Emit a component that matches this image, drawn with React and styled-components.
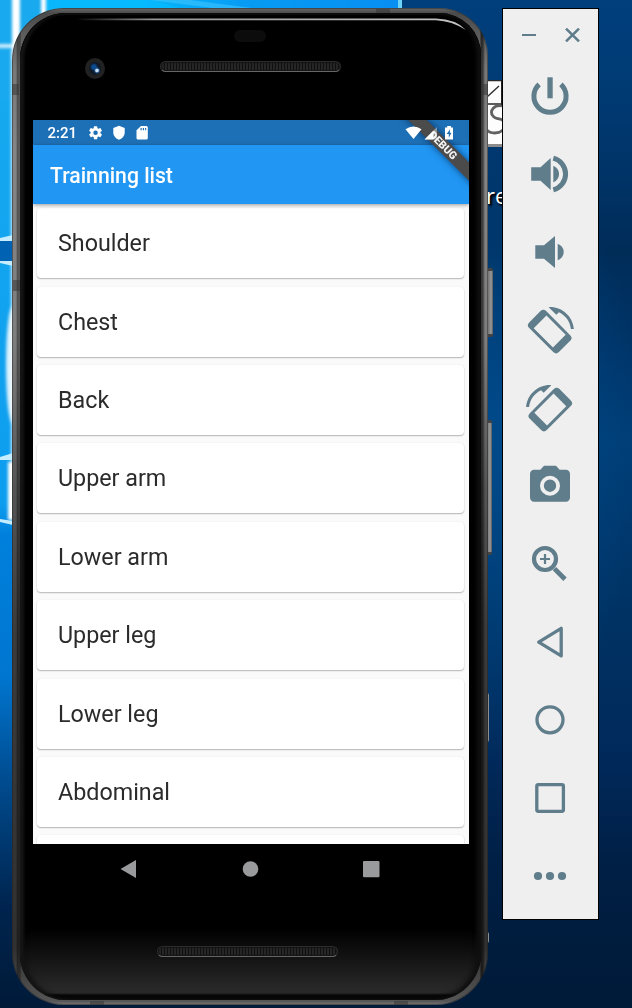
import React from "react";
import styled, { createGlobalStyle } from "styled-components";

const GlobalStyle = createGlobalStyle`
  * { box-sizing: border-box; }
  body { margin: 0; overflow: hidden; font-family: Roboto, "Liberation Sans", sans-serif; }
`;

const ICON = "#607d8b";

/* ---------- desktop ---------- */

const Desktop = styled.div`
  position: relative;
  width: 632px;
  height: 1008px;
  overflow: hidden;
  background:
    radial-gradient(ellipse 160px 330px at 480px 440px, rgba(0, 76, 142, 0.9), rgba(0, 76, 142, 0)),
    linear-gradient(180deg, #003e7c 0, #003c76 70px, #003468 170px, #002c58 250px, #003467 340px, #003e77 440px,
      #003263 620px, #00295a 760px, #001f44 870px, #001a38 1008px);
`;

const Wallpaper = styled.svg`
  position: absolute;
  inset: 0;
`;

const Shortcut = styled.div`
  position: absolute;
  left: 482px;
  top: 80px;
  width: 21px;
`;

const ShortcutTile = styled.svg`
  display: block;
`;

const ShortcutLabel = styled.div`
  margin-top: 32px;
  padding-left: 4px;
  font: 22px/32px "Open Sans", sans-serif;
  color: #fff;
  text-shadow: 1px 1px 2px #000, 2px 2px 2px #000;
`;

/* ---------- phone ---------- */

const Shell = styled.section`
  position: absolute;
  left: 12px;
  top: 8px;
  width: 476px;
  height: 997px;
  padding: 5px 7px 5px 8px;
  border-radius: 52px 48px 52px 52px;
  background:
    linear-gradient(90deg, rgba(0, 0, 0, 0) 0 4px, rgba(0, 0, 0, 0.5) 6px, rgba(0, 0, 0, 0.15) 7px, rgba(0, 0, 0, 0.5) 8px,
      rgba(0, 0, 0, 0) 9px 468px, rgba(0, 0, 0, 0.6) 469px, rgba(0, 0, 0, 0.5) 471px, rgba(0, 0, 0, 0) 473px),
    linear-gradient(180deg, #6b6b6b 0, #4a4a4a 5px, #777 60px, #858585 140px, #7e7e7e 330px, #555 480px, #3b3b3b 620px, #303030 940px, #555 993px, #777);
  box-shadow: inset 0 0 0 1px rgba(30, 30, 30, 0.45);
`;

const Glass = styled.div`
  display: flex;
  flex-direction: column;
  align-items: center;
  height: 987px;
  padding: 0 1px 0 0;
  border-radius: 46px 42px 46px 46px;
  background: linear-gradient(180deg, #000 0 915px, #101010 940px, #2b2b2b 980px, #0a0a0a 982px);
  box-shadow: inset 0 2px 0 #0b0b0b, inset 4px 0 3px #151515, inset -4px 0 4px #111, inset 0 0 8px #000;
`;

const TopBezel = styled.header`
  position: relative;
  width: 100%;
  height: 107px;
`;

const Highlight = styled.svg`
  position: absolute;
  left: 56px;
  top: 4px;
`;

const Sensor = styled.div`
  position: absolute;
  left: 214px;
  top: 17px;
  width: 32px;
  height: 12px;
  border-radius: 6px;
  background: #0c0c0c;
`;

const Camera = styled.div`
  position: absolute;
  left: 65px;
  top: 45px;
  width: 20px;
  height: 21px;
  border: 4px solid #222;
  border-radius: 50%;
  background:
    radial-gradient(circle at 8px 8.5px, #c3dff5 0 1.3px, rgba(30, 90, 160, 0.7) 2.3px, transparent 3.6px),
    radial-gradient(circle at 5px 5px, #0c4a90 0 2px, #101a26 4px);
`;

const Grille = styled.div`
  position: ${(p) => (p.$front ? "absolute" : "static")};
  left: 140px;
  top: 48px;
  width: 181px;
  height: 11px;
  margin: ${(p) => (p.$front ? "0" : "52px 0 0 -5px")};
  border: 1px solid #2c2c2c;
  border-bottom-color: #666;
  border-radius: 6px;
  background: repeating-linear-gradient(90deg, #101010 0 1px, #262626 1px 3px);
  box-shadow: inset 0 0 1px 1px #151515;
`;

const SideButton = styled.div`
  position: absolute;
  left: ${(p) => p.$x}px;
  top: ${(p) => p.$top}px;
  width: ${(p) => p.$w}px;
  height: ${(p) => p.$h}px;
  border-radius: 0 2px 2px 0;
  background: linear-gradient(90deg, #666, #999 70%, #555);
  border-top: ${(p) => (p.$w > 3 ? 3 : 0)}px solid #444;
  border-bottom: ${(p) => (p.$w > 3 ? 3 : 0)}px solid #444;
`;

const Seam = styled.div`
  position: absolute;
  left: ${(p) => p.$x}px;
  top: ${(p) => p.$y}px;
  width: ${(p) => p.$w}px;
  height: ${(p) => p.$h}px;
  background: rgba(55, 55, 55, 0.55);
`;

/* ---------- app screen ---------- */

const Screen = styled.main`
  position: relative;
  display: flex;
  flex-direction: column;
  flex: none;
  width: 436px;
  height: 724px;
  margin-left: 2px;
  overflow: hidden;
  background: #fafafa;
`;

const StatusBar = styled.div`
  position: relative;
  z-index: 3;
  display: flex;
  align-items: center;
  flex: none;
  height: 25px;
  padding: 0 15px 0 14.5px;
  color: #fff;
`;

const StatusTint = styled.div`
  position: absolute;
  inset: 0 0 auto;
  z-index: 0;
  height: 25px;
  background: #1e70b6;
`;

const Clock = styled.span`
  width: 41.5px;
  padding-top: 1px;
  font-size: 15px;
  font-weight: 500;
  line-height: 24px;
`;

const StatusIcons = styled.svg`
  display: block;
  margin-left: ${(p) => (p.$end ? "auto" : "0")};
`;

const AppBar = styled.div`
  position: relative;
  z-index: 1;
  display: flex;
  align-items: center;
  flex: none;
  height: 59px;
  padding: 1px 17px 0;
  background: #2196f3;
  box-shadow: 0 1px 4px rgba(0, 0, 0, 0.4);
`;

const Title = styled.h1`
  margin: 0;
  font-size: 21.2px;
  font-weight: 500;
  color: #fff;
`;

const RibbonClip = styled.div`
  position: absolute;
  inset: 0;
  z-index: 2;
  overflow: hidden;
  pointer-events: none;
`;

const Ribbon = styled.div`
  position: absolute;
  left: 360px;
  top: 19px;
  width: 100px;
  height: 13px;
  transform: rotate(45deg);
  background: #4b4b4b;
  box-shadow: 0 0 6px 1px rgba(0, 30, 70, 0.55);
  color: #f4f4f4;
  font-size: 10.8px;
  font-weight: 900;
  line-height: 13px;
  text-align: center;
`;

const List = styled.ul`
  display: flex;
  flex-direction: column;
  gap: 8.4px;
  margin: 0;
  padding: 4.2px 5px 0 4px;
  list-style: none;
`;

const Card = styled.li`
  display: flex;
  align-items: center;
  flex: none;
  height: 70px;
  padding: 0 21px;
  border-radius: 4px;
  background: #fff;
  box-shadow: 0 1px 1.5px rgba(0, 0, 0, 0.27), 0 0 1.5px rgba(0, 0, 0, 0.07);
  color: #2b2b2b;
  font-size: 23.3px;
`;

const NavBar = styled.nav`
  display: flex;
  justify-content: space-between;
  align-items: center;
  flex: none;
  width: 260px;
  height: 50px;
`;

/* ---------- emulator toolbar ---------- */

const Toolbar = styled.aside`
  position: absolute;
  left: 502px;
  top: 8px;
  width: 97px;
  height: 912px;
  border: 1px solid #000;
  background: #efefef;
`;

const WindowControls = styled.div`
  display: flex;
  justify-content: space-between;
  height: 48px;
  padding: 19px 18px 0 19px;
`;

const Tool = styled.button`
  display: block;
  width: 95px;
  height: 78px;
  margin: 0;
  padding: 0;
  border: 0;
  background: none;
`;

const stroke = { fill: "none", stroke: ICON };

const rotatePhone = (
  <>
    <path
      fillRule="evenodd"
      transform="translate(-.3 1.6) rotate(45)"
      d="M-17 -12H17Q21 -12 21 -8V8Q21 12 17 12H-17Q-21 12 -21 8V-8Q-21 -12 -17 -12ZM-13.6 -9V9H13.6V-9Z"
    />
    <path
      transform="translate(-24 -22.9) scale(2)"
      d="M16.48 2.52c3.27 1.55 5.61 4.72 5.97 8.48h1.5C23.44 4.84 18.29 0 12 0l-.66.03 3.81 3.81 1.33-1.32z"
    />
  </>
);

const tools = [
  ["Power", <>
    <path d="M-10.9 -11.6A16.1 16.1 0 1 0 10.9 -11.6" strokeWidth="5" {...stroke} />
    <rect x="-2.6" y="-18.7" width="5.3" height="21" />
  </>],
  ["Volume up", <>
    <path d="M-18.8 -6.7H-9.5L.7 -16V16L-9.5 6.7H-18.8Z" />
    <path d="M3.3 -8.3C6.8 -6.8 9 -3.8 9 0S6.8 6.8 3.3 8.3Z" />
    <path d="M3.3 -15.8A16.3 16.3 0 0 1 3.3 15.8" strokeWidth="5" {...stroke} />
  </>],
  ["Volume down", <>
    <path d="M-14.7 -6.7H-6L5 -16V16L-6 6.7H-14.7Z" />
    <path d="M7.7 -8.3C11.4 -6.8 13.7 -3.8 13.7 0S11.4 6.8 7.7 8.3Z" />
  </>],
  ["Rotate left", rotatePhone],
  ["Rotate right", <g transform="scale(-1 1)">{rotatePhone}</g>],
  ["Screenshot", <g transform="translate(-24 -24.3) scale(2)">
    <path fillRule="evenodd" d="M9 2 7.17 4H4c-1.1 0-2 .9-2 2v12c0 1.1.9 2 2 2h16c1.1 0 2-.9 2-2V6c0-1.1-.9-2-2-2h-3.17L15 2zM12 7a5 5 0 1 1 0 10 5 5 0 0 1 0-10zM12 8.9a3.1 3.1 0 1 0 0 6.2 3.1 3.1 0 0 0 0-6.2z" />
  </g>],
  ["Zoom", <>
    <circle cx="-5" cy="-5" r="11" strokeWidth="4.2" {...stroke} />
    <path d="M-10 -5H0M-5 -10V0" strokeWidth="2.2" {...stroke} />
    <path d="M4.4 4.6 15 15.2" strokeWidth="4.8" {...stroke} />
  </>],
  ["Back", <path d="M11.2 -13.7V13.9L-11.3 .2Z" strokeWidth="3.3" strokeLinejoin="round" {...stroke} />],
  ["Home", <circle r="13" cy="-.2" strokeWidth="3.3" {...stroke} />],
  ["Overview", <rect x="-13.2" y="-13.3" width="26.6" height="26.6" rx="1.5" strokeWidth="3.3" {...stroke} />],
  ["More", <><circle cx="-12" r="4.1" /><circle r="4.1" /><circle cx="12" r="4.1" /></>],
];

const muscles = ["Shoulder", "Chest", "Back", "Upper arm", "Lower arm", "Upper leg", "Lower leg", "Abdominal", ""];

function DesktopPicture() {
  return (
    <Wallpaper width="632" height="1008">
      <defs>
        <linearGradient id="leftPane" x1="0" y1="0" x2="0" y2="1">
          <stop offset="0" stopColor="#18acef" />
          <stop offset=".5" stopColor="#0d9def" />
          <stop offset=".53" stopColor="#0080dc" />
          <stop offset=".67" stopColor="#0076d0" />
          <stop offset=".77" stopColor="#004d92" />
          <stop offset=".9" stopColor="#00244e" />
          <stop offset="1" stopColor="#001a38" />
        </linearGradient>
        <linearGradient id="topPane">
          <stop offset="0" stopColor="#16a9ec" />
          <stop offset=".35" stopColor="#08b8fa" />
          <stop offset=".6" stopColor="#079cf4" />
          <stop offset="1" stopColor="#078ff2" />
        </linearGradient>
        <linearGradient id="floor">
          <stop offset="0" stopColor="#001a38" stopOpacity="0" />
          <stop offset="1" stopColor="#001a38" />
        </linearGradient>
        <filter id="glow" x="-200%" width="500%" y="-50%" height="200%"><feGaussianBlur stdDeviation="1.6" /></filter>
      </defs>
      <rect width="100" height="1008" fill="url(#leftPane)" />
      <rect x="40" y="950" width="60" height="58" fill="url(#floor)" />
      <rect width="402" height="100" fill="url(#topPane)" />
      <path d="M0 100V0H60V100Z" fill="#19a9ee" />
      <path d="M46 0H150L260 30H46Z" fill="#06baff" opacity=".8" />
      <path d="M150 0 260 14H300L190 0Z" fill="#43c7ff" opacity=".55" />
      <rect x="398" y="0" width="4" height="12" fill="#6bd2f8" />
      <g filter="url(#glow)" fill="#fff">
        <rect x="12" y="-4" width="8" height="64" />
        <rect x="41" y="-4" width="5" height="24" />
        <rect x="-2" y="44" width="18" height="4" opacity=".8" />
        <rect x="11" y="50" width="5" height="470" opacity=".75" />
        <ellipse cx="13" cy="365" rx="7" ry="60" opacity=".85" />
        <rect x="8" y="462" width="6" height="58" />
      </g>
      <rect y="241" width="13" height="20" fill="#0062b2" />
      <g fill="#c6edff">
        <path d="M0 238 13 235V241H0ZM0 261H13V266L0 263Z" />
        <path d="M0 457 13 453V460H0ZM0 519 13 521V525L0 522Z" />
      </g>
    </Wallpaper>
  );
}

export default function App() {
  return (
    <Desktop>
      <GlobalStyle />
      <DesktopPicture />
      <Shortcut>
        <ShortcutTile width="21" height="67">
          <rect width="21" height="67" fill="#fdfdfd" />
          <path d="M0 .5H21M0 24H21" stroke="#292929" strokeWidth="1.6" />
          <path d="M5 17 17 6" stroke="#292929" strokeWidth="1.3" />
          <path d="M21 26C12 24 7 31 11 36C14 40 20 38 21 41M5 50C8 54 17 54 21 50" fill="none" stroke="#626262" strokeWidth="2.8" />
          <rect y="64" width="21" height="3" fill="#8c8c8c" />
          <rect x="19" width="2" height="25" fill="#222" />
        </ShortcutTile>
        <ShortcutLabel>re</ShortcutLabel>
      </Shortcut>

      <SideButton $x={487} $top={268} $w={6} $h={69} />
      <SideButton $x={486} $top={420} $w={6} $h={135} />
      <SideButton $x={487} $top={693} $w={2} $h={49} />
      <SideButton $x={487} $top={932} $w={2} $h={11} />
      <Shell>
        <Seam $x={0} $y={76} $w={7} $h={11} />
        <Seam $x={1} $y={272} $w={7} $h={11} />
        <Seam $x={469} $y={76} $w={7} $h={11} />
        <Seam $x={364} $y={1} $w={14} $h={4} />
        <Seam $x={78} $y={993} $w={14} $h={4} />
        <Seam $x={382} $y={993} $w={14} $h={4} />
        <Glass>
          <TopBezel>
            <Highlight width="402" height="18">
              <defs>
                <linearGradient id="edgeLight">
                  <stop offset="0" stopColor="#aaa" stopOpacity="0" />
                  <stop offset=".2" stopColor="#969696" />
                  <stop offset="1" stopColor="#c4c4c4" />
                </linearGradient>
              </defs>
              <path d="M0 1.4H360Q380 2 390 13Q376 4 360 3.2H0Z" fill="url(#edgeLight)" />
            </Highlight>
            <Sensor />
            <Camera />
            <Grille $front />
          </TopBezel>
          <Screen>
            <StatusTint />
            <StatusBar>
              <Clock>2:21</Clock>
              <StatusIcons width="62" height="16" fill="#fff">
                <path
                  transform="translate(-1.6 -.5) scale(.68)"
                  d="M19.14 12.94c.04-.3.06-.61.06-.94 0-.32-.02-.64-.07-.94l2.03-1.58a.49.49 0 0 0 .12-.61l-1.92-3.32a.488.488 0 0 0-.59-.22l-2.39.96c-.5-.38-1.03-.7-1.62-.94l-.36-2.54a.484.484 0 0 0-.48-.41h-3.84c-.24 0-.43.17-.47.41l-.36 2.54c-.59.24-1.13.57-1.62.94l-2.39-.96c-.22-.08-.47 0-.59.22L2.74 8.87c-.12.21-.08.47.12.61l2.03 1.58c-.05.3-.09.63-.09.94s.02.64.07.94l-2.03 1.58a.49.49 0 0 0-.12.61l1.92 3.32c.12.22.37.29.59.22l2.39-.96c.5.38 1.03.7 1.62.94l.36 2.54c.05.24.24.41.48.41h3.84c.24 0 .44-.17.47-.41l.36-2.54c.59-.24 1.13-.56 1.62-.94l2.39.96c.22.08.47 0 .59-.22l1.92-3.32c.12-.22.07-.47-.12-.61zM12 15.3A3.3 3.3 0 1 1 12 8.7a3.3 3.3 0 0 1 0 6.6z"
                />
                <path d="M30 .8 35.7 3V7.5C35.7 11 33 13.7 30 14.7C27 13.7 24.3 11 24.3 7.5V3Z" />
                <path fillRule="evenodd" d="M52 1H57.3Q58.8 1 58.8 2.5V13Q58.8 14.5 57.3 14.5H49Q47.5 14.5 47.5 13V5.3ZM51.5 3V5.2H52.7V3ZM53.8 3V5.2H55V3ZM56.1 3V5.2H57.2V3Z" />
              </StatusIcons>
              <StatusIcons $end width="50" height="16">
                <path d="M1.5 4.2Q9.5 -1.2 17.5 4.2L9.5 14Z" fill="#fff" />
                <path d="M20.5 14.5 33 2V14.5Z" fill="#fff" opacity=".4" />
                <path d="M20.5 14.5 29.5 5.5V14.5Z" fill="#fff" />
                <path fillRule="evenodd" d="M43.2 1H47V2.4H49V14.5H41V2.4H43.2ZM46 4.2 42.7 9H44.8V12.8L47.5 7.8H45.8Z" fill="#fff" />
              </StatusIcons>
            </StatusBar>
            <AppBar>
              <Title>Trainning list</Title>
            </AppBar>
            <RibbonClip><Ribbon>DEBUG</Ribbon></RibbonClip>
            <List>
              {muscles.map((name, i) => <Card key={i}>{name}</Card>)}
            </List>
          </Screen>
          <NavBar>
            <svg width="17" height="20" fill="#999a9c"><path d="M.5 10 16 1V19Z" /></svg>
            <svg width="17" height="18" fill="#999a9c"><circle cx="8.5" cy="9" r="7.8" /></svg>
            <svg width="17" height="18" fill="#999a9c"><rect y="1" width="16.5" height="16.2" rx="1" /></svg>
          </NavBar>
          <Grille />
        </Glass>
      </Shell>

      <Toolbar>
        <WindowControls>
          <svg width="14" height="14"><path d="M0 7H14" stroke={ICON} strokeWidth="2" /></svg>
          <svg width="15" height="14"><path d="M1 .6 14 13.4M14 .6 1 13.4" stroke={ICON} strokeWidth="2.5" /></svg>
        </WindowControls>
        {tools.map(([name, art]) => (
          <Tool key={name} aria-label={name}>
            <svg width="95" height="78" viewBox="-47 -39 95 78" fill={ICON}>{art}</svg>
          </Tool>
        ))}
      </Toolbar>
    </Desktop>
  );
}
